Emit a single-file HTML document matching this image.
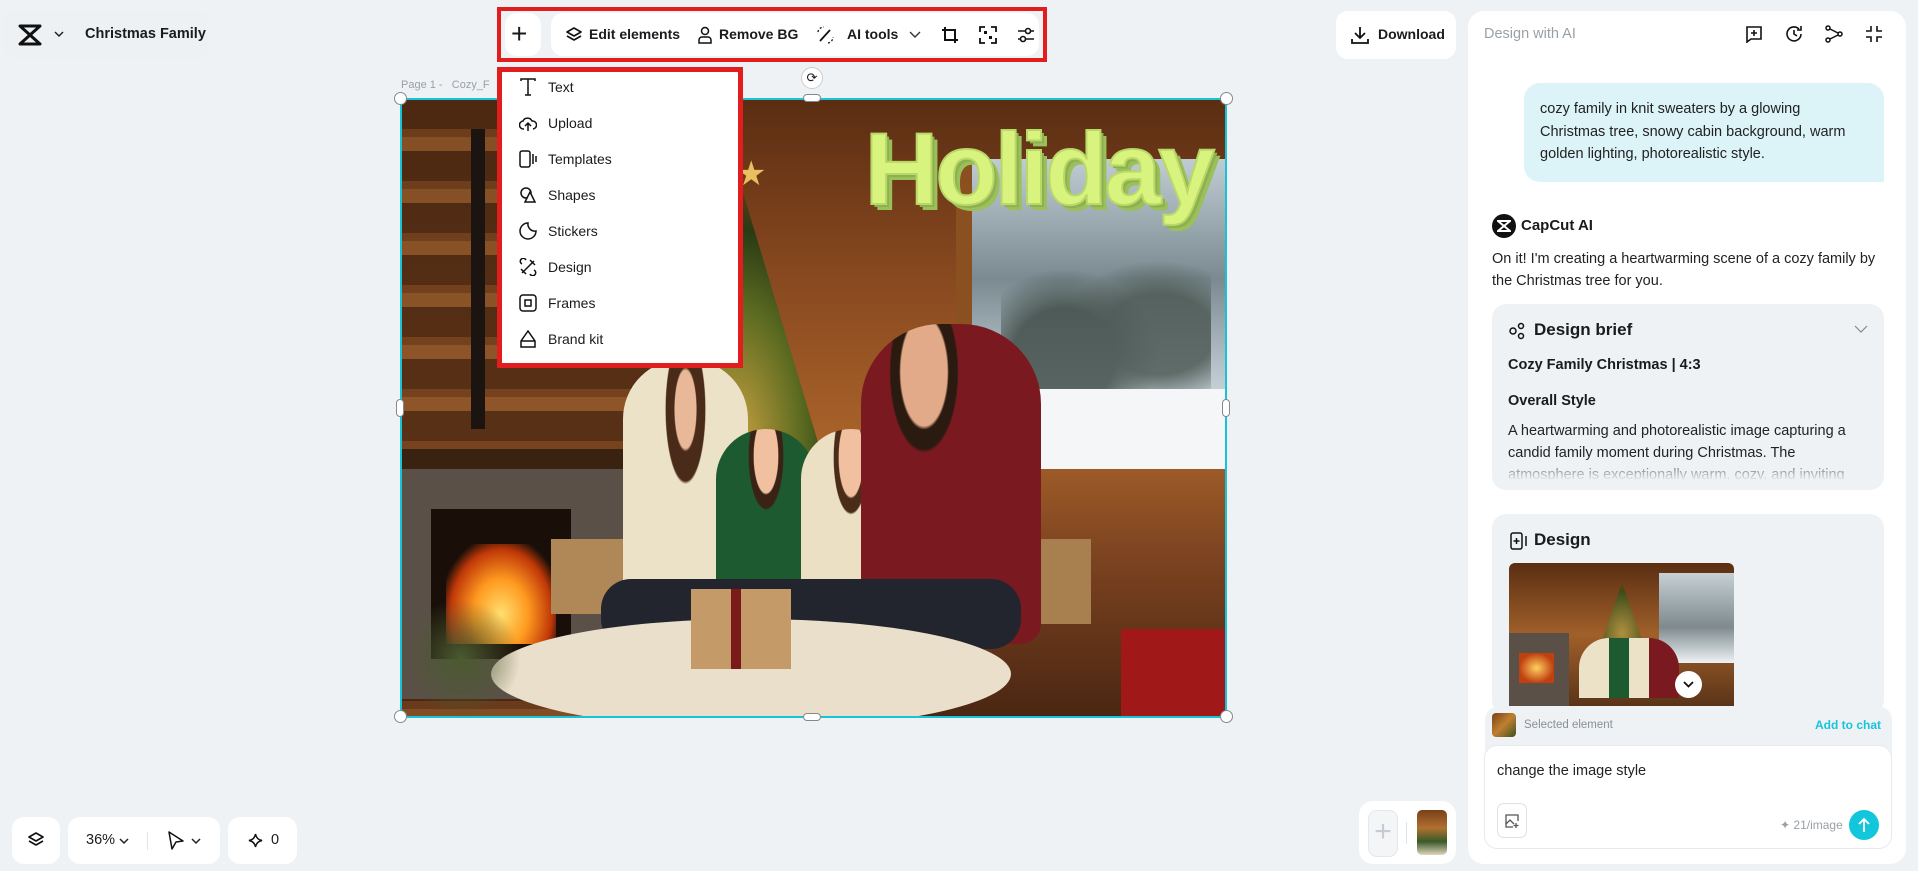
<!DOCTYPE html>
<html><head><meta charset="utf-8"><style>
*{box-sizing:border-box;margin:0;padding:0}
body{width:1918px;height:871px;background:#eef2f5;font-family:"Liberation Sans",sans-serif;color:#1b1b1f;position:relative;overflow:hidden}
.a{position:absolute}
.w{background:#fff;border-radius:12px}
.t{font-size:14px;font-weight:600;white-space:nowrap}
svg{display:block}
.mi{position:absolute;left:0;height:36px;display:flex;align-items:center;font-size:14px}
.mi svg{margin-left:17px;margin-right:11px}
</style></head><body>

<!-- top-left -->
<div class="a" style="left:3px;top:10px;width:206px;height:48px;background:#edf1f4;border-radius:12px"></div>
<svg class="a" style="left:18px;top:24px" width="24" height="22" viewBox="0 0 24 22"><path d="M2 2h20L12 11 22 20H2L12 11Z" fill="none" stroke="#111" stroke-width="3" stroke-linejoin="round"/></svg>
<svg class="a" style="left:54px;top:30px" width="10" height="8" viewBox="0 0 10 8"><path d="M1 2l4 4 4-4" fill="none" stroke="#222" stroke-width="1.5"/></svg>
<div class="a t" style="left:85px;top:26px;font-size:14.5px">Christmas Family</div>

<!-- toolbar -->
<div class="a" style="left:497px;top:7px;width:550px;height:55px;border:4px solid #e11d1d"></div>
<div class="a w" style="left:505px;top:13px;width:36px;height:43px"></div>
<div class="a" style="left:511px;top:18px;font-size:28px;font-weight:300">+</div>
<div class="a w" style="left:551px;top:13px;width:488px;height:43px"></div>
<svg class="a" style="left:566px;top:27px" width="16" height="16" viewBox="0 0 16 16"><path d="M8 1L15 5 8 9 1 5Z M1 9l7 4 7-4" fill="none" stroke="#111" stroke-width="1.6" stroke-linejoin="round"/></svg>
<div class="a t" style="left:589px;top:26px">Edit elements</div>
<svg class="a" style="left:698px;top:26px" width="14" height="18" viewBox="0 0 14 18"><circle cx="7" cy="5" r="3.5" fill="none" stroke="#111" stroke-width="1.5"/><path d="M1 17v-3a3 3 0 013-3h6a3 3 0 013 3v3z" fill="none" stroke="#111" stroke-width="1.5"/></svg>
<div class="a t" style="left:719px;top:26px">Remove BG</div>
<svg class="a" style="left:816px;top:26px" width="18" height="18" viewBox="0 0 18 18"><path d="M4 15L14 4" stroke="#111" stroke-width="1.8"/><path d="M2 6a6 6 0 016-5M12 17a6 6 0 005-6" fill="none" stroke="#111" stroke-width="1.3" stroke-dasharray="2 2"/></svg>
<div class="a t" style="left:847px;top:26px">AI tools</div>
<svg class="a" style="left:909px;top:31px" width="12" height="8" viewBox="0 0 12 8"><path d="M1 1l5 5 5-5" fill="none" stroke="#333" stroke-width="1.4"/></svg>
<svg class="a" style="left:941px;top:26px" width="18" height="18" viewBox="0 0 18 18"><path d="M4 1v13h13M1 4h13v13" fill="none" stroke="#111" stroke-width="2"/></svg>
<svg class="a" style="left:979px;top:26px" width="18" height="18" viewBox="0 0 18 18"><path d="M1 6V1h5M12 1h5v5M17 12v5h-5M6 17H1v-5" fill="none" stroke="#111" stroke-width="1.8"/><rect x="5" y="5" width="3" height="3" fill="#111"/><rect x="10" y="10" width="3" height="3" fill="#111"/></svg>
<svg class="a" style="left:1017px;top:26px" width="18" height="18" viewBox="0 0 18 18"><path d="M1 5h16M1 13h16" stroke="#111" stroke-width="1.6"/><circle cx="11" cy="5" r="2.5" fill="#fff" stroke="#111" stroke-width="1.6"/><circle cx="6" cy="13" r="2.5" fill="#fff" stroke="#111" stroke-width="1.6"/></svg>

<!-- canvas image -->
<div class="a" style="left:401px;top:99px;width:825px;height:618px;overflow:hidden;background:#6a3a1a">
  <div class="a" style="left:0;top:0;width:825px;height:618px;background:linear-gradient(180deg,#5a2d12 0%,#8a4a20 30%,#a8622a 55%,#7a4220 75%,#4a2612 100%)"></div>
  <div class="a" style="left:0;top:0;width:300px;height:618px;background:repeating-linear-gradient(180deg,#4a2812 0 30px,#6e3e1c 30px 38px,#8a5428 38px 52px);opacity:.85"></div>
  <div class="a" style="left:70px;top:30px;width:14px;height:300px;background:#1c1410"></div>
  <div class="a" style="left:0;top:350px;width:230px;height:250px;background:#5b5048;border-top:20px solid #3a2210"></div>
  <div class="a" style="left:30px;top:410px;width:140px;height:150px;background:#1a0f08"></div>
  <div class="a" style="left:45px;top:445px;width:110px;height:100px;background:radial-gradient(ellipse at 50% 70%,#ffe070 0%,#ff9a20 35%,#c03808 65%,transparent 80%)"></div>
  <div class="a" style="left:200px;top:70px;width:270px;height:450px;background:radial-gradient(ellipse at 50% 60%,#c8a040 0%,#5a6a20 35%,#2a3a14 55%,transparent 72%);clip-path:polygon(50% 0,100% 100%,0 100%)"></div>
  <div class="a" style="left:335px;top:55px;font-size:34px;color:#e8c060">★</div>
  <div class="a" style="left:555px;top:60px;width:270px;height:300px;background:linear-gradient(180deg,#c0ccd4 0%,#7a8a90 40%,#b8c4cc 70%,#eef2f4 100%);border-left:16px solid #8a5020"></div>
  <div class="a" style="left:600px;top:120px;width:210px;height:230px;background:radial-gradient(ellipse at 30% 60%,#3e4a44 0 25%,transparent 45%),radial-gradient(ellipse at 75% 50%,#4a5650 0 25%,transparent 45%);opacity:.8"></div>
  <div class="a" style="left:560px;top:290px;width:265px;height:80px;background:#f4f6f8"></div>
  <div class="a" style="left:150px;top:440px;width:80px;height:75px;background:#b08858"></div>
  <div class="a" style="left:600px;top:440px;width:90px;height:85px;background:#a88050"></div>
  <div class="a" style="left:222px;top:260px;width:125px;height:280px;border-radius:60px 60px 20px 20px;background:radial-gradient(ellipse at 50% 18%,#e8b898 0 12%,#4a2a18 13% 22%,#ece2c8 23%)"></div>
  <div class="a" style="left:315px;top:330px;width:100px;height:180px;border-radius:50px 50px 10px 10px;background:radial-gradient(ellipse at 50% 15%,#f0c0a0 0 17%,#3a2214 18% 24%,#1d5a30 25%)"></div>
  <div class="a" style="left:400px;top:330px;width:100px;height:190px;border-radius:50px 50px 10px 10px;background:radial-gradient(ellipse at 50% 15%,#f0c0a0 0 17%,#4a2c18 18% 24%,#ece0c4 25%)"></div>
  <div class="a" style="left:460px;top:225px;width:180px;height:320px;border-radius:80px 80px 20px 20px;background:radial-gradient(ellipse at 35% 15%,#e2aa88 0 14%,#2a1a10 15% 20%,#7a1a20 21%)"></div>
  <div class="a" style="left:200px;top:480px;width:420px;height:70px;border-radius:30px;background:#22252e"></div>
  <div class="a" style="left:90px;top:520px;width:520px;height:110px;border-radius:50%;background:#eadfca"></div>
  <div class="a" style="left:290px;top:490px;width:100px;height:80px;background:linear-gradient(90deg,#c49a68 40%,#7a1a1a 40% 50%,#c49a68 50%)"></div>
  <div class="a" style="left:0;top:500px;width:120px;height:118px;background:radial-gradient(ellipse,#4a5a30,transparent 70%)"></div>
  <div class="a" style="left:720px;top:530px;width:105px;height:88px;background:#a01818"></div>
  <div class="a" style="left:300px;top:12px;width:525px;text-align:right;padding-right:14px;font-size:102px;font-weight:900;letter-spacing:-3px;color:#d8f47e;text-shadow:3px 3px 0 #8fb050,6px 6px 0 #9ac05a;-webkit-text-stroke:2px #b8d868">Holiday</div>
</div>
<div class="a" style="left:400px;top:98px;width:827px;height:620px;border:2px solid #17c3d6"></div>
<div class="a" style="left:401px;top:79px;font-size:11px;color:#9aa0a6">Page 1 -&nbsp;&nbsp; Cozy_F</div>
<div class="a" style="left:394px;top:92px;width:13px;height:13px;border-radius:50%;background:#fff;border:1px solid #888"></div>
<div class="a" style="left:1220px;top:92px;width:13px;height:13px;border-radius:50%;background:#fff;border:1px solid #888"></div>
<div class="a" style="left:394px;top:710px;width:13px;height:13px;border-radius:50%;background:#fff;border:1px solid #888"></div>
<div class="a" style="left:1220px;top:710px;width:13px;height:13px;border-radius:50%;background:#fff;border:1px solid #888"></div>
<div class="a" style="left:803px;top:94px;width:18px;height:8px;border-radius:4px;background:#fff;border:1px solid #888"></div>
<div class="a" style="left:803px;top:713px;width:18px;height:8px;border-radius:4px;background:#fff;border:1px solid #888"></div>
<div class="a" style="left:396px;top:399px;width:8px;height:18px;border-radius:4px;background:#fff;border:1px solid #888"></div>
<div class="a" style="left:1222px;top:399px;width:8px;height:18px;border-radius:4px;background:#fff;border:1px solid #888"></div>
<div class="a" style="left:801px;top:67px;width:22px;height:22px;border-radius:50%;background:#fff;border:1px solid #ccc;font-size:13px;text-align:center;line-height:20px">⟳</div>

<!-- dropdown -->
<div class="a" style="left:497px;top:67px;width:246px;height:301px;border:5px solid #e11d1d;background:#fff">
  <div class="mi" style="top:-3px"><svg width="18" height="18" viewBox="0 0 18 18"><path d="M2 3V1h14v2M9 1v16M6 17h6" fill="none" stroke="#111" stroke-width="1.5"/></svg>Text</div>
  <div class="mi" style="top:33px"><svg width="18" height="18" viewBox="0 0 18 18"><path d="M5 15a4 4 0 01-1-8 5 5 0 019 0 4 4 0 011 8M9 17V9M6 12l3-3 3 3" fill="none" stroke="#111" stroke-width="1.5"/></svg>Upload</div>
  <div class="mi" style="top:69px"><svg width="18" height="18" viewBox="0 0 18 18"><rect x="1" y="1" width="10" height="16" rx="2" fill="none" stroke="#111" stroke-width="1.5"/><path d="M14 4v10M17 6v6" stroke="#111" stroke-width="1.5"/></svg>Templates</div>
  <div class="mi" style="top:105px"><svg width="18" height="18" viewBox="0 0 18 18"><circle cx="7" cy="7" r="5" fill="none" stroke="#111" stroke-width="1.5"/><path d="M11 6l5 10H6z" fill="#fff" stroke="#111" stroke-width="1.5"/></svg>Shapes</div>
  <div class="mi" style="top:141px"><svg width="18" height="18" viewBox="0 0 18 18"><path d="M9 1a8 8 0 108 8 7 7 0 01-8-8z" fill="none" stroke="#111" stroke-width="1.5"/></svg>Stickers</div>
  <div class="mi" style="top:177px"><svg width="18" height="18" viewBox="0 0 18 18"><path d="M3 15L15 3M7 2a3 3 0 10-4 4M11 16a3 3 0 104-4M2 11l5 5M11 2l5 5" fill="none" stroke="#111" stroke-width="1.5"/></svg>Design</div>
  <div class="mi" style="top:213px"><svg width="18" height="18" viewBox="0 0 18 18"><rect x="1" y="1" width="16" height="16" rx="3" fill="none" stroke="#111" stroke-width="1.5"/><rect x="6" y="6" width="6" height="6" fill="none" stroke="#111" stroke-width="1.5"/></svg>Frames</div>
  <div class="mi" style="top:249px"><svg width="18" height="18" viewBox="0 0 18 18"><path d="M9 1L2 11v6h14v-6z M2 11h14" fill="none" stroke="#111" stroke-width="1.5"/></svg>Brand kit</div>
</div>

<!-- download -->
<div class="a w" style="left:1336px;top:11px;width:120px;height:48px"></div>
<svg class="a" style="left:1351px;top:26px" width="18" height="18" viewBox="0 0 18 18"><path d="M9 1v11M4 7l5 5 5-5M1 13v4h16v-4" fill="none" stroke="#111" stroke-width="1.8"/></svg>
<div class="a t" style="left:1378px;top:26px">Download</div>

<!-- right panel -->
<div class="a" style="left:1468px;top:11px;width:438px;height:853px;background:#fff;border-radius:16px"></div>
<div class="a" style="left:1484px;top:26px;font-size:14.5px;color:#9aa0a8">Design with AI</div>
<svg class="a" style="left:1745px;top:25px" width="18" height="18" viewBox="0 0 18 18"><path d="M2 2h14v12H6l-4 3z" fill="none" stroke="#111" stroke-width="1.6"/><path d="M9 5v6M6 8h6" stroke="#111" stroke-width="1.6"/></svg>
<svg class="a" style="left:1785px;top:25px" width="18" height="18" viewBox="0 0 18 18"><path d="M16 9a7 7 0 11-2-5M16 1v4h-4M9 5v4l3 2" fill="none" stroke="#111" stroke-width="1.6"/></svg>
<svg class="a" style="left:1825px;top:25px" width="18" height="18" viewBox="0 0 18 18"><circle cx="3" cy="3" r="2" fill="none" stroke="#111" stroke-width="1.5"/><circle cx="3" cy="15" r="2" fill="none" stroke="#111" stroke-width="1.5"/><circle cx="15" cy="9" r="2" fill="none" stroke="#111" stroke-width="1.5"/><path d="M5 4l8 4M5 14l8-4" stroke="#111" stroke-width="1.5"/></svg>
<svg class="a" style="left:1865px;top:25px" width="18" height="18" viewBox="0 0 18 18"><path d="M6 1v5H1M12 1v5h5M6 17v-5H1M12 17v-5h5" fill="none" stroke="#111" stroke-width="1.6"/></svg>

<div class="a" style="left:1524px;top:83px;width:360px;height:99px;background:#dcf3f8;border-radius:16px 16px 0 16px;padding:15px 16px;font-size:14.5px;line-height:22.5px;color:#222">cozy family in knit sweaters by a glowing Christmas tree, snowy cabin background, warm golden lighting, photorealistic style.</div>

<div class="a" style="left:1492px;top:214px;width:24px;height:24px;border-radius:50%;background:#111"></div>
<svg class="a" style="left:1497px;top:220px" width="14" height="12" viewBox="0 0 14 12"><path d="M1 1h12L7 6l6 5H1l6-5z" fill="none" stroke="#fff" stroke-width="2"/></svg>
<div class="a t" style="left:1521px;top:217px;font-size:15px">CapCut AI</div>
<div class="a" style="left:1492px;top:249px;width:390px;font-size:14.5px;line-height:21.5px;color:#222">On it! I'm creating a heartwarming scene of a cozy family by the Christmas tree for you.</div>

<div class="a" style="left:1492px;top:304px;width:392px;height:186px;background:#eef2f5;border-radius:14px;overflow:hidden">
  <svg class="a" style="left:16px;top:18px" width="18" height="18" viewBox="0 0 18 18"><circle cx="5" cy="9" r="3" fill="none" stroke="#111" stroke-width="1.5"/><circle cx="13" cy="4" r="2.5" fill="none" stroke="#111" stroke-width="1.5"/><circle cx="13" cy="14" r="2.5" fill="none" stroke="#111" stroke-width="1.5"/></svg>
  <div class="a" style="left:42px;top:16px;font-size:17px;font-weight:600">Design brief</div>
  <svg class="a" style="left:362px;top:21px" width="14" height="8" viewBox="0 0 14 8"><path d="M1 1l6 6 6-6" fill="none" stroke="#888" stroke-width="1.2"/></svg>
  <div class="a" style="left:16px;top:53px;font-size:14.5px;font-weight:600">Cozy Family Christmas | 4:3</div>
  <div class="a" style="left:16px;top:89px;font-size:14.5px;font-weight:600">Overall Style</div>
  <div class="a" style="left:16px;top:116px;width:366px;font-size:14.5px;line-height:22px;color:#222;-webkit-mask-image:linear-gradient(180deg,#000 55%,transparent 92%)">A heartwarming and photorealistic image capturing a candid family moment during Christmas. The atmosphere is exceptionally warm, cozy, and inviting</div>
</div>

<div class="a" style="left:1492px;top:514px;width:392px;height:200px;background:#eef2f5;border-radius:14px"></div>
<svg class="a" style="left:1510px;top:532px" width="18" height="18" viewBox="0 0 18 18"><rect x="1" y="1" width="11" height="16" rx="2" fill="none" stroke="#111" stroke-width="1.5"/><path d="M6.5 6v6M3.5 9h6M16 4v10" stroke="#111" stroke-width="1.5"/></svg>
<div class="a" style="left:1534px;top:530px;font-size:17px;font-weight:600">Design</div>
<div class="a" style="left:1509px;top:563px;width:225px;height:143px;border-radius:6px 6px 0 0;overflow:hidden;background:linear-gradient(180deg,#5a2e12,#a0602a 50%,#5a3418)">
  <div class="a" style="left:150px;top:10px;width:75px;height:90px;background:linear-gradient(180deg,#c6d0d6,#7e8a8e 60%,#eef2f4)"></div>
  <div class="a" style="left:0;top:70px;width:60px;height:73px;background:#5a5048"></div>
  <div class="a" style="left:10px;top:90px;width:35px;height:30px;background:radial-gradient(#ffd060,#c04010 70%)"></div>
  <div class="a" style="left:78px;top:20px;width:70px;height:100px;background:radial-gradient(ellipse,#b09040,#3a4a18 60%,transparent 72%);clip-path:polygon(50% 0,100% 100%,0 100%)"></div>
  <div class="a" style="left:70px;top:75px;width:100px;height:60px;border-radius:30px 30px 0 0;background:linear-gradient(90deg,#ece2c8 30%,#1d5a30 30% 50%,#ece2c8 50% 70%,#7a1a20 70%)"></div>
</div>
<div class="a" style="left:1675px;top:671px;width:27px;height:27px;border-radius:50%;background:#fff"></div>
<svg class="a" style="left:1683px;top:681px" width="11" height="7" viewBox="0 0 11 7"><path d="M1 1l4.5 4.5L10 1" fill="none" stroke="#111" stroke-width="1.8"/></svg>

<div class="a" style="left:1485px;top:706px;width:407px;height:50px;background:#eef2f5;border-radius:14px 14px 0 0"></div>
<div class="a" style="left:1492px;top:713px;width:24px;height:24px;border-radius:4px;background:linear-gradient(135deg,#7a4018,#c08030 50%,#3a5020)"></div>
<div class="a" style="left:1524px;top:719px;font-size:11.5px;color:#8a9096">Selected element</div>
<div class="a" style="left:1815px;top:718px;font-size:12px;font-weight:700;color:#19c3dc">Add to chat</div>
<div class="a" style="left:1485px;top:746px;width:406px;height:102px;background:#fff;border-radius:12px;box-shadow:0 0 0 1px #e6eaee"></div>
<div class="a" style="left:1497px;top:763px;font-size:14.5px;color:#222">change the image style</div>
<div class="a" style="left:1497px;top:803px;width:30px;height:35px;border:1px solid #dde1e5;border-radius:7px"></div>
<svg class="a" style="left:1504px;top:813px" width="16" height="16" viewBox="0 0 16 16"><path d="M9 14H2V2h12v6M2 11l4-4 4 4M12 10v5M9.5 12.5h5" fill="none" stroke="#555" stroke-width="1.3"/></svg>
<div class="a" style="left:1780px;top:818px;font-size:12px;color:#9aa0a6">✦ 21/image</div>
<div class="a" style="left:1849px;top:810px;width:30px;height:30px;border-radius:50%;background:#12c6dc"></div>
<svg class="a" style="left:1857px;top:817px" width="14" height="16" viewBox="0 0 14 16"><path d="M7 15V2M2 7l5-5 5 5" fill="none" stroke="#fff" stroke-width="1.8"/></svg>

<!-- bottom pages -->
<div class="a w" style="left:1359px;top:801px;width:97px;height:63px;border-radius:14px"></div>
<div class="a" style="left:1368px;top:810px;width:30px;height:47px;border-radius:9px;background:#f3f5f7;border:1px solid #e4e8ec;color:#c6ccd2;font-size:30px;text-align:center;line-height:42px;font-weight:300">+</div>
<div class="a" style="left:1406px;top:822px;width:1px;height:22px;background:#e0e4e8"></div>
<div class="a" style="left:1417px;top:810px;width:30px;height:45px;border-radius:5px;background:linear-gradient(180deg,#7a4018,#b07030 40%,#3a5a28 70%,#e0d4bc)"></div>

<!-- bottom left -->
<div class="a w" style="left:12px;top:817px;width:48px;height:47px"></div>
<svg class="a" style="left:28px;top:832px" width="16" height="17" viewBox="0 0 16 17"><path d="M8 1l7 4-7 4-7-4z M1 9l7 4 7-4" fill="none" stroke="#111" stroke-width="1.6" stroke-linejoin="round"/></svg>
<div class="a w" style="left:68px;top:817px;width:152px;height:47px"></div>
<div class="a" style="left:86px;top:832px;font-size:14.5px">36%</div>
<svg class="a" style="left:119px;top:838px" width="10" height="7" viewBox="0 0 10 7"><path d="M1 1l4 4 4-4" fill="none" stroke="#222" stroke-width="1.5"/></svg>
<div class="a" style="left:147px;top:832px;width:1px;height:18px;background:#e2e5e8"></div>
<svg class="a" style="left:168px;top:831px" width="16" height="20" viewBox="0 0 16 20"><path d="M1 1l14 9-7 1-4 7z" fill="none" stroke="#111" stroke-width="1.5" stroke-linejoin="round"/></svg>
<svg class="a" style="left:191px;top:838px" width="10" height="7" viewBox="0 0 10 7"><path d="M1 1l4 4 4-4" fill="none" stroke="#222" stroke-width="1.5"/></svg>
<div class="a w" style="left:228px;top:817px;width:69px;height:47px"></div>
<svg class="a" style="left:248px;top:833px" width="15" height="15" viewBox="0 0 16 16"><path d="M8 1Q9 7 15 8Q9 9 8 15Q7 9 1 8Q7 7 8 1z" fill="none" stroke="#111" stroke-width="1.6"/></svg>
<div class="a" style="left:271px;top:832px;font-size:14.5px">0</div>
</body></html>
